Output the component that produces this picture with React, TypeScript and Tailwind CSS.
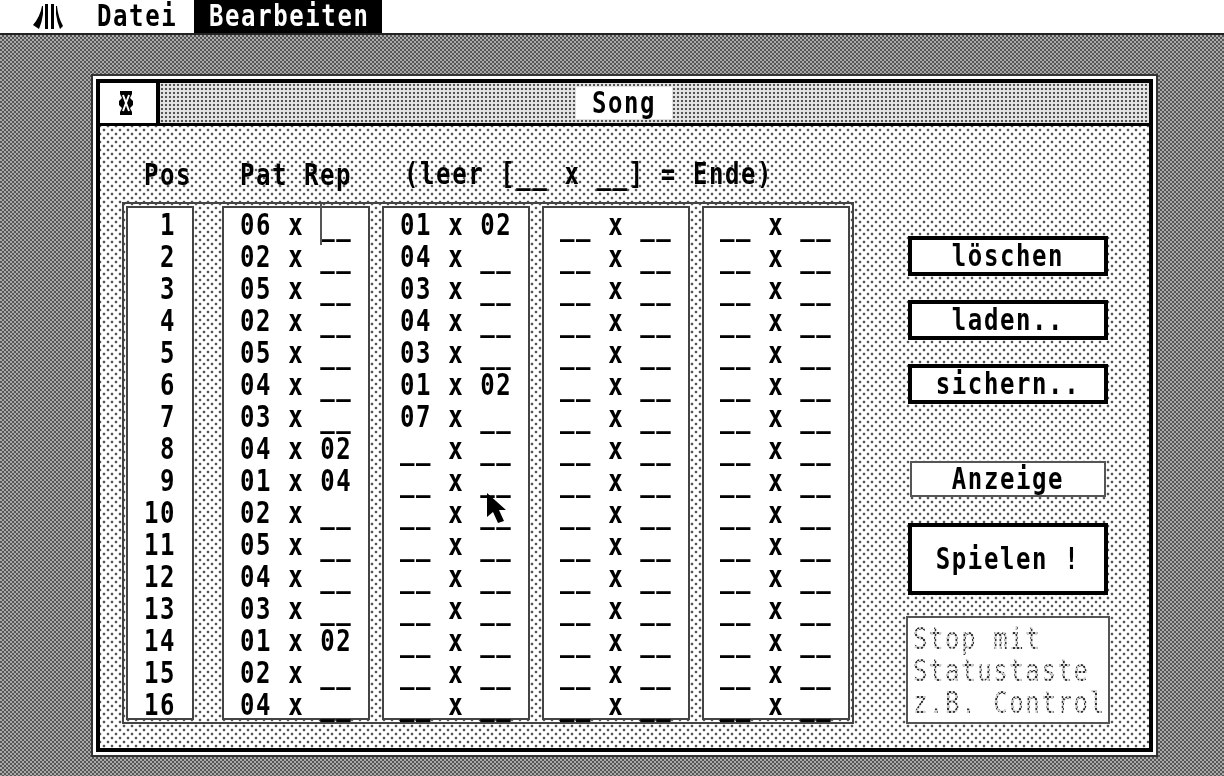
const rowsA = ["06 x __","02 x __","05 x __","02 x __","05 x __","04 x __","03 x __","04 x 02","01 x 04","02 x __","05 x __","04 x __","03 x __","01 x 02","02 x __","04 x __"];
const rowsB = ["01 x 02","04 x __","03 x __","04 x __","03 x __","01 x 02","07 x __","__ x __","__ x __","__ x __","__ x __","__ x __","__ x __","__ x __","__ x __","__ x __"];
const rowsC = Array.from({ length: 16 }, () => "__ x __");

function T({ children, className = "" }: { children: React.ReactNode; className?: string }) {
  return <span className={"inline-block origin-center scale-y-[1.25] whitespace-pre " + className}>{children}</span>;
}

function Column({ rows }: { rows: string[] }) {
  return (
    <div className="w-[148px] h-full bg-white border-2 border-[#444] pl-[16px] pt-[1px]">
      {rows.map((r, i) => (
        <div key={i} className="h-[32px] leading-[32px]"><T>{r}</T></div>
      ))}
    </div>
  );
}

function Btn({ label }: { label: string }) {
  return (
    <div className="w-[200px] h-[40px] bg-white border-4 border-black flex items-center justify-center leading-[32px]">
      <T>{label}</T>
    </div>
  );
}

export default function App() {
  return (
    <div className="w-[1224px] h-[776px] overflow-hidden flex flex-col bg-white text-black font-['DejaVu_Sans_Mono',monospace] font-bold text-[24px] tracking-[1.6px]">
      <div className="h-[35px] shrink-0 bg-white border-b-2 border-[#222] flex items-stretch">
        <div className="w-[97px] flex items-center pl-[32px]">
          <svg width="32" height="28" viewBox="32 2 32 28" fill="#000">
            <rect x="45" y="3" width="3" height="25" />
            <rect x="51" y="3" width="3" height="25" />
            <path d="M42 5 L43 5 L43 13 Q42 21 39 28 L33 24 Q40 16 42 5 Z" />
            <path d="M57 5 L56 5 L56 13 Q57 21 60 28 L63 25 Q58 16 57 5 Z" />
          </svg>
        </div>
        <div className="w-[97px] leading-[33px]"><T>Datei</T></div>
        <div className="w-[188px] bg-black text-white pl-[15px] leading-[33px]"><T>Bearbeiten</T></div>
      </div>
      <div className="flex-1 pl-[91px] pt-[39px] bg-[repeating-conic-gradient(#555_0_25%,#aaa_0_50%)] bg-[length:4px_4px]">
        <div className="w-[1067px] h-[683px] border-2 border-[#333] bg-white p-[3px]">
          <div className="w-full h-full border-4 border-black flex flex-col bg-white">
            <div className="h-[43px] shrink-0 border-b-[3px] border-black flex">
              <div className="w-[60px] border-r-4 border-black flex items-center justify-center bg-white pr-[4px]">
                <svg width="14" height="24" viewBox="0 0 14 24">
                  <path d="M1 0h12v3l-2 4 3 3v4l-3 3 2 4v3H1v-3l2-4-3-3v-4l3-3-2-4z" fill="#000" />
                  <path d="M4 4l6 16M10 4l-6 16" stroke="#fff" strokeWidth="2" />
                </svg>
              </div>
              <div className="flex-1 pl-[416px] py-[4px] bg-[#e4e4e4] bg-[radial-gradient(circle,#555_1px,transparent_1.6px)] bg-[length:4px_4px]">
                <div className="w-[96px] h-full bg-white text-center leading-[32px]"><T>Song</T></div>
              </div>
            </div>
            <div className="flex-1 flex pl-[22px] bg-white bg-[radial-gradient(circle,#555_1.1px,transparent_1.7px),radial-gradient(circle,#555_1.1px,transparent_1.7px)] bg-[length:8px_8px] bg-[position:0_0,4px_4px]">
              <div className="w-[732px] shrink-0">
                <div className="h-[76px] pt-[33px] flex leading-[32px]">
                  <div className="ml-[22px] w-[96px]"><T>Pos</T></div>
                  <div className="w-[64px]"><T>Pat</T></div>
                  <div className="w-[100px]"><T>Rep</T></div>
                  <T>(leer [__ x __] = Ende)</T>
                </div>
                <div className="relative w-[732px] h-[522px] border-2 border-[#444] p-[2px] flex bg-white bg-[radial-gradient(circle,#555_1.1px,transparent_1.7px),radial-gradient(circle,#555_1.1px,transparent_1.7px)] bg-[length:8px_8px] bg-[position:0_0,4px_4px]">
                  <div className="w-[68px] h-full bg-white border-2 border-[#444] pt-[1px] pr-[16px] text-right">
                    {Array.from({ length: 16 }, (_, i) => (
                      <div key={i} className="h-[32px] leading-[32px]"><T>{String(i + 1)}</T></div>
                    ))}
                  </div>
                  <div className="ml-[28px] flex gap-[12px] h-full">
                    <Column rows={rowsA} />
                    <Column rows={rowsB} />
                    <Column rows={rowsC} />
                    <Column rows={rowsC} />
                  </div>
                  <div className="absolute left-[196px] top-[0px] w-[2px] h-[41px] bg-[#555]" />
                  <svg className="absolute left-[362px] top-[288px]" width="24" height="36" viewBox="0 0 24 36">
                    <path d="M1 1 L1 25 L7 20 L12 31 L18 29 L13 18 L20 18 Z" fill="#000" stroke="#fff" strokeWidth="0" />
                  </svg>
                </div>
              </div>
              <div className="ml-[54px] pt-[110px] w-[204px] flex flex-col">
                <Btn label="löschen" />
                <div className="h-[24px]" />
                <Btn label="laden.." />
                <div className="h-[24px]" />
                <Btn label="sichern.." />
                <div className="ml-[2px] mt-[57px] w-[196px] h-[36px] bg-white border-2 border-[#555] flex items-center justify-center"><T>Anzeige</T></div>
                <div className="mt-[26px] w-[200px] h-[72px] bg-white border-4 border-black flex items-center justify-center"><T>Spielen !</T></div>
                <div className="-ml-[2px] mt-[21px] w-[204px] h-[108px] bg-white border-2 border-[#555] pl-[5px] pt-[5px]">
                  {["Stop mit", "Statustaste", "z.B. Control"].map((l) => (
                    <div key={l} className="h-[32px] leading-[32px]">
                      <T className="bg-[repeating-conic-gradient(#333_0_25%,#ccc_0_50%)] bg-[length:4px_4px] bg-clip-text text-transparent font-normal">{l}</T>
                    </div>
                  ))}
                </div>
              </div>
            </div>
          </div>
        </div>
      </div>
    </div>
  );
}
